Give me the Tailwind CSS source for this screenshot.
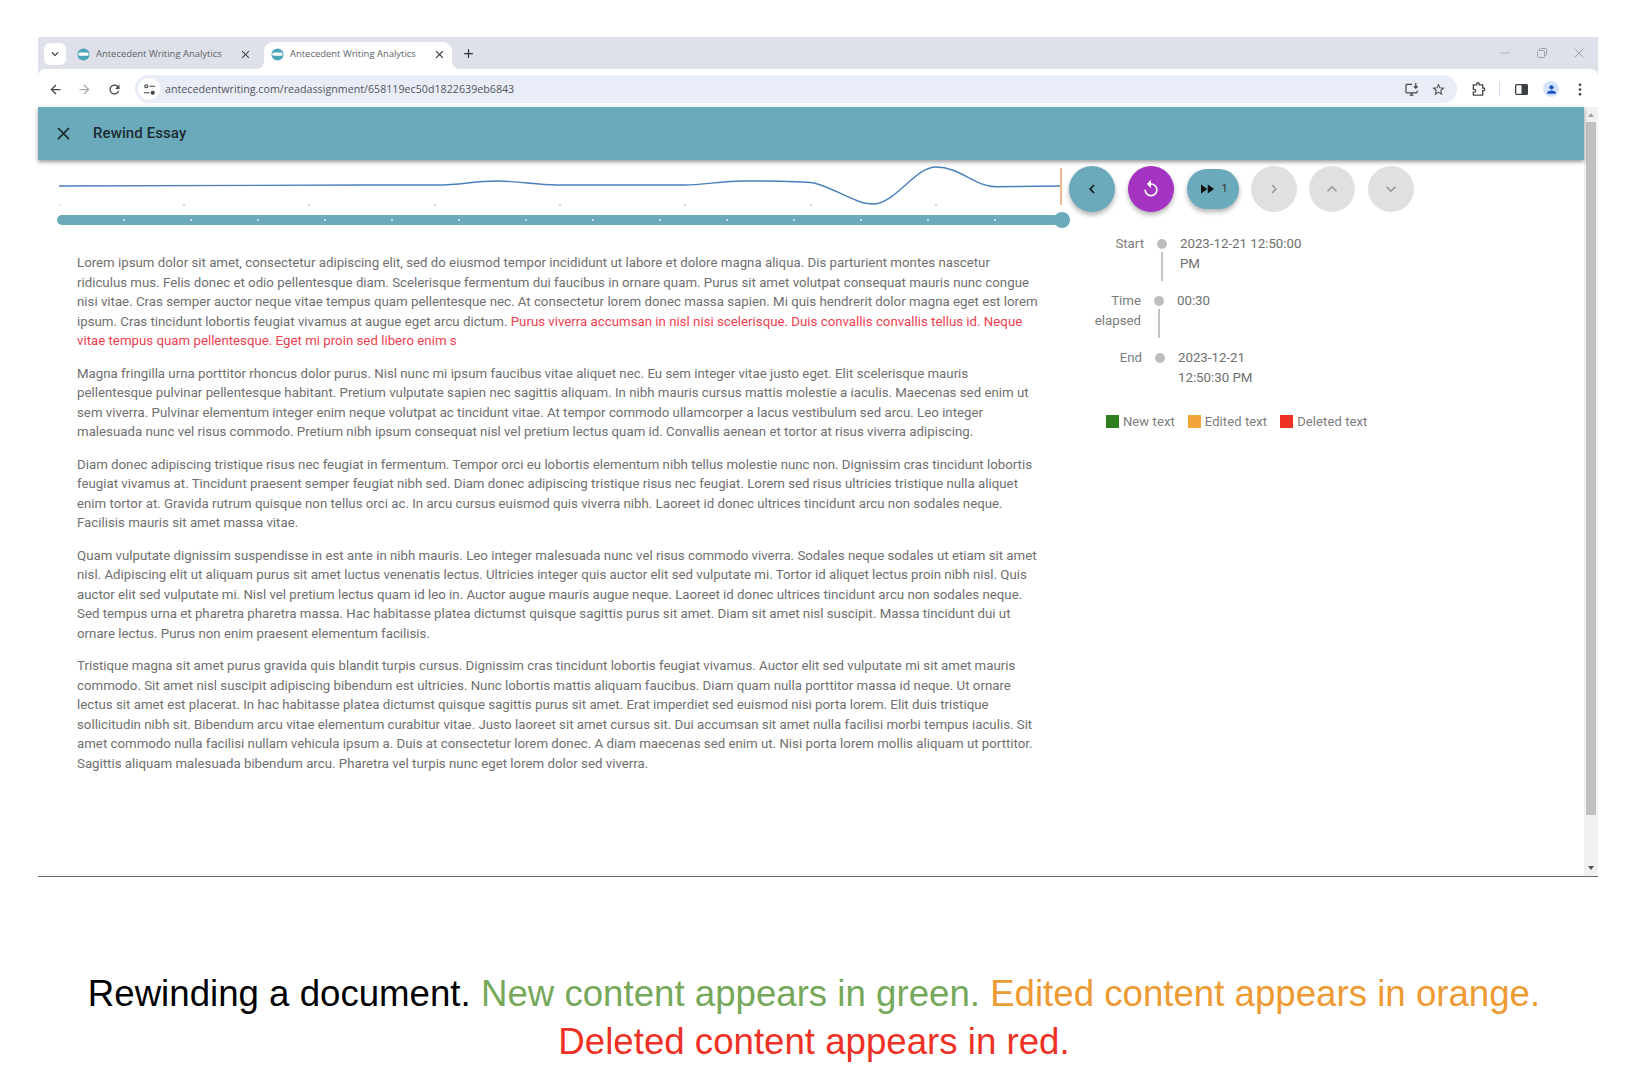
<!DOCTYPE html>
<html>
<head>
<meta charset="utf-8">
<script src="https://cdn.jsdelivr.net/npm/@tailwindcss/browser@4"></script>
</head>
<body class="bg-white">
<div class="w-[1639px] h-[1090px] overflow-hidden pt-[37px] font-['Roboto',sans-serif]">
  <div class="ml-[38px] w-[1560px] h-[840px] border-b border-[#666c6e] flex flex-col bg-[#dee1e9]">
    <!-- tab strip -->
    <div class="h-[32px] bg-[#dee1e9] flex items-end relative shrink-0">
      <div class="absolute left-[6px] top-[6px] w-[22px] h-[22px] rounded-[6px] bg-white flex items-center justify-center">
        <svg class="w-[14px] h-[14px] text-[#333]" viewBox="0 0 24 24" fill="currentColor"><path d="M16.59 8.59 12 13.17 7.41 8.59 6 10l6 6 6-6z"/></svg>
      </div>
      <div class="ml-[34px] w-[192px] h-[26px] flex items-center pl-[5px] pb-[4px] shrink-0">
        <svg class="w-[13px] h-[13px] shrink-0" viewBox="0 0 14 14"><circle cx="7" cy="7" r="6.5" fill="#4da4bb"/><rect x="1.5" y="4.8" width="11" height="3.6" rx="1.8" fill="#fff"/></svg>
        <span class="ml-[6px] text-[9.45px] text-[#5f6368] font-['Open_Sans',sans-serif] whitespace-nowrap w-[126px]">Antecedent Writing Analytics</span>
        <svg class="ml-[17px] w-[13px] h-[13px] text-[#444]" viewBox="0 0 24 24" fill="currentColor"><path d="M19 6.41 17.59 5 12 10.59 6.41 5 5 6.41 10.59 12 5 17.59 6.41 19 12 13.41 17.59 19 19 17.59 13.41 12z"/></svg>
      </div>
      <div class="w-[188px] h-[27px] bg-white rounded-t-[9px] flex items-center pl-[7px] pb-[3px] shrink-0 relative">
        <i class="absolute left-[-8px] bottom-0 w-[8px] h-[8px] bg-[radial-gradient(circle_at_0_0,#dee1e9_8px,#fff_8px)]"></i>
        <i class="absolute right-[-8px] bottom-0 w-[8px] h-[8px] bg-[radial-gradient(circle_at_100%_0,#dee1e9_8px,#fff_8px)]"></i>
        <svg class="w-[13px] h-[13px] shrink-0" viewBox="0 0 14 14"><circle cx="7" cy="7" r="6.5" fill="#4da4bb"/><rect x="1.5" y="4.8" width="11" height="3.6" rx="1.8" fill="#fff"/></svg>
        <span class="ml-[6px] text-[9.45px] text-[#5f6368] font-['Open_Sans',sans-serif] whitespace-nowrap w-[126px]">Antecedent Writing Analytics</span>
        <svg class="ml-[17px] w-[13px] h-[13px] text-[#333]" viewBox="0 0 24 24" fill="currentColor"><path d="M19 6.41 17.59 5 12 10.59 6.41 5 5 6.41 10.59 12 5 17.59 6.41 19 12 13.41 17.59 19 19 17.59 13.41 12z"/></svg>
      </div>
      <svg class="ml-[9px] mb-[8px] w-[15px] h-[15px] text-[#333]" viewBox="0 0 24 24" fill="currentColor"><path d="M19 13h-6v6h-2v-6H5v-2h6V5h2v6h6v2z"/></svg>
      <div class="ml-auto flex items-center h-full pr-[14px] gap-[27px] self-center">
        <svg class="w-[10px] h-[10px] text-[#b4b7bd]" viewBox="0 0 10 10"><rect y="4.5" width="10" height="1" fill="currentColor"/></svg>
        <svg class="w-[10px] h-[10px] text-[#a0a3a8]" viewBox="0 0 10 10" fill="none" stroke="currentColor"><rect x=".5" y="2.5" width="7" height="7" rx="1"/><path d="M2.5 2.5V1.5a1 1 0 0 1 1-1h5a1 1 0 0 1 1 1v5a1 1 0 0 1-1 1h-1"/></svg>
        <svg class="w-[10px] h-[10px] text-[#a0a3a8]" viewBox="0 0 10 10" stroke="currentColor"><path d="M.5.5l9 9M9.5.5l-9 9"/></svg>
      </div>
    </div>
    <!-- toolbar -->
    <div class="h-[38px] bg-white rounded-t-[7px] flex items-center shrink-0 text-[#45474a] pt-[2px]">
      <svg class="ml-[10px] w-[15px] h-[15px]" viewBox="0 0 24 24" fill="currentColor"><path d="M20 11H7.83l5.59-5.59L12 4l-8 8 8 8 1.41-1.41L7.83 13H20v-2z"/></svg>
      <svg class="ml-[14px] w-[15px] h-[15px] text-[#a8aaad]" viewBox="0 0 24 24" fill="currentColor"><path d="M4 11h12.17l-5.59-5.59L12 4l8 8-8 8-1.41-1.41L16.17 13H4v-2z"/></svg>
      <svg class="ml-[15px] w-[15px] h-[15px]" viewBox="0 0 24 24" fill="currentColor"><path d="M17.65 6.35C16.2 4.9 14.21 4 12 4c-4.42 0-7.99 3.58-7.99 8s3.57 8 7.99 8c3.73 0 6.84-2.55 7.73-6h-2.08c-.82 2.33-3.04 4-5.65 4-3.31 0-6-2.69-6-6s2.69-6 6-6c1.66 0 3.14.69 4.22 1.78L13 11h7V4l-2.35 2.35z"/></svg>
      <div class="ml-[13px] w-[1322px] h-[28px] bg-[#e9edf8] rounded-full flex items-center pl-[3px] relative shrink-0">
        <div class="w-[22px] h-[22px] rounded-full bg-white flex items-center justify-center">
          <svg class="w-[13px] h-[13px]" viewBox="0 0 14 14" fill="none" stroke="#444" stroke-width="1.3"><circle cx="3.5" cy="3.5" r="1.6"/><path d="M7 3.5h6M1 10.5h6"/><circle cx="10.5" cy="10.5" r="1.6" fill="#444"/></svg>
        </div>
        <span class="ml-[5px] text-[10.7px] text-[#53565a] font-['Open_Sans',sans-serif] whitespace-nowrap">antecedentwriting.com/readassignment/658119ec50d1822639eb6843</span>
        <div class="ml-auto flex items-center gap-[11px] pr-[11px]">
          <svg class="w-[15px] h-[15px]" viewBox="0 0 16 16" fill="none" stroke="#45474a" stroke-width="1.3"><path d="M7.5 2.5H2a1 1 0 0 0-1 1v7a1 1 0 0 0 1 1h10a1 1 0 0 0 1-1V9M5 14h4M7 12v2M11.5 1v5M9.5 4.5l2 2 2-2"/></svg>
          <svg class="w-[15px] h-[15px]" viewBox="0 0 24 24" fill="#45474a"><path d="M22 9.24l-7.19-.62L12 2 9.19 8.63 2 9.24l5.46 4.73L5.82 21 12 17.27 18.18 21l-1.63-7.03L22 9.24zM12 15.4l-3.76 2.27 1-4.28-3.32-2.88 4.38-.38L12 6.1l1.71 4.04 4.38.38-3.32 2.88 1 4.28L12 15.4z"/></svg>
        </div>
      </div>
      <svg class="ml-[14px] w-[15px] h-[15px]" viewBox="0 0 16 16" fill="none" stroke="#45474a" stroke-width="1.4"><path d="M6 3V2.2a1.4 1.4 0 0 1 2.8 0V3h3.7v3.4h.8a1.4 1.4 0 0 1 0 2.8h-.8V14H2.5v-3.2h1a1.5 1.5 0 0 0 0-3h-1V3z"/></svg>
      <div class="ml-[13px] w-[1px] h-[14px] bg-[#d5dcf0]"></div>
      <svg class="ml-[15px] w-[13px] h-[13px]" viewBox="0 0 14 14"><rect x=".7" y="1.7" width="12.6" height="10.6" rx="1" fill="none" stroke="#3c3f43" stroke-width="1.4"/><rect x="7" y="2" width="6" height="10" fill="#3c3f43"/></svg>
      <div class="ml-[15px] w-[16px] h-[16px] rounded-full bg-[#d3e3fd] flex items-center justify-center">
        <svg class="w-[13px] h-[13px]" viewBox="0 0 24 24" fill="#1a4fc4"><path d="M12 12c2.21 0 4-1.79 4-4s-1.79-4-4-4-4 1.79-4 4 1.79 4 4 4zm0 2c-2.67 0-8 1.34-8 4v2h16v-2c0-2.66-5.33-4-8-4z"/></svg>
      </div>
      <svg class="ml-[19px] w-[4px] h-[13px]" viewBox="0 0 4 13" fill="#3c3f43"><circle cx="2" cy="1.8" r="1.3"/><circle cx="2" cy="6.5" r="1.3"/><circle cx="2" cy="11.2" r="1.3"/></svg>
    </div>
    <!-- page -->
    <div class="flex-1 flex min-h-0 bg-white">
      <div class="flex-1 min-w-0 flex flex-col">
        <div class="h-[53px] bg-[#6aaabb] shadow-[0_2px_4px_rgba(0,0,0,0.4)] flex items-center shrink-0 relative">
          <svg class="ml-[15px] w-[21px] h-[21px] text-[#1c2b30]" viewBox="0 0 24 24" fill="currentColor"><path d="M19 6.41 17.59 5 12 10.59 6.41 5 5 6.41 10.59 12 5 17.59 6.41 19 12 13.41 17.59 19 19 17.59 13.41 12z"/></svg>
          <span class="ml-[19px] text-[15px] font-medium text-[#1c2b30] tracking-[0.1px]">Rewind Essay</span>
        </div>
        <div class="flex flex-1">
          <!-- left -->
          <div class="w-[1031px] shrink-0 pl-[20px]">
            <svg class="block ml-px w-[1004px] h-[50px]" viewBox="59 160 1004 50" fill="none">
              <path d="M59 186 C150 185.5 300 185 437 185 C460 185 475 181 497 181 C520 181 535 185 557 185 L684 185 C705 185 720 181 745 181 C775 181 800 181 814 183 C835 188 855 204 873 204 C895 204 915 167 936 167 C960 167 975 186.7 996 186.7 L1060 186" stroke="#4a80bb" stroke-width="1.4"/>
              <path d="M1061 168V205" stroke="#f09a5a" stroke-width="1.4"/>
              <g fill="#aaa"><circle cx="59" cy="205" r=".8"/><circle cx="184" cy="205" r=".8"/><circle cx="309" cy="205" r=".8"/><circle cx="435" cy="205" r=".8"/><circle cx="560" cy="205" r=".8"/><circle cx="685" cy="205" r=".8"/><circle cx="811" cy="205" r=".8"/><circle cx="936" cy="205" r=".8"/></g>
            </svg>
            <div class="relative mt-[5px] -ml-px w-[1010px] h-[10px] rounded-full bg-[#6aaabb] flex items-center pl-[66px] gap-[65px]">
              <i class="w-[2px] h-[2px] rounded-full bg-white/80"></i><i class="w-[2px] h-[2px] rounded-full bg-white/80"></i><i class="w-[2px] h-[2px] rounded-full bg-white/80"></i><i class="w-[2px] h-[2px] rounded-full bg-white/80"></i><i class="w-[2px] h-[2px] rounded-full bg-white/80"></i><i class="w-[2px] h-[2px] rounded-full bg-white/80"></i><i class="w-[2px] h-[2px] rounded-full bg-white/80"></i><i class="w-[2px] h-[2px] rounded-full bg-white/80"></i><i class="w-[2px] h-[2px] rounded-full bg-white/80"></i><i class="w-[2px] h-[2px] rounded-full bg-white/80"></i><i class="w-[2px] h-[2px] rounded-full bg-white/80"></i><i class="w-[2px] h-[2px] rounded-full bg-white/80"></i><i class="w-[2px] h-[2px] rounded-full bg-white/80"></i><i class="w-[2px] h-[2px] rounded-full bg-white/80"></i>
              <div class="absolute right-[-3px] top-[-3px] w-[16px] h-[16px] rounded-full bg-[#6aaabb]"></div>
            </div>
            <div class="mt-[28px] pl-[19px] text-[13.27px] leading-[19.5px] text-[#6f6f6f] whitespace-nowrap flex flex-col gap-[13px]">
              <p>Lorem ipsum dolor sit amet, consectetur adipiscing elit, sed do eiusmod tempor incididunt ut labore et dolore magna aliqua. Dis parturient montes nascetur<br>ridiculus mus. Felis donec et odio pellentesque diam. Scelerisque fermentum dui faucibus in ornare quam. Purus sit amet volutpat consequat mauris nunc congue<br>nisi vitae. Cras semper auctor neque vitae tempus quam pellentesque nec. At consectetur lorem donec massa sapien. Mi quis hendrerit dolor magna eget est lorem<br>ipsum. Cras tincidunt lobortis feugiat vivamus at augue eget arcu dictum. <span class="text-[#f04050]">Purus viverra accumsan in nisl nisi scelerisque. Duis convallis convallis tellus id. Neque<br>vitae tempus quam pellentesque. Eget mi proin sed libero enim s</span></p>
              <p>Magna fringilla urna porttitor rhoncus dolor purus. Nisl nunc mi ipsum faucibus vitae aliquet nec. Eu sem integer vitae justo eget. Elit scelerisque mauris<br>pellentesque pulvinar pellentesque habitant. Pretium vulputate sapien nec sagittis aliquam. In nibh mauris cursus mattis molestie a iaculis. Maecenas sed enim ut<br>sem viverra. Pulvinar elementum integer enim neque volutpat ac tincidunt vitae. At tempor commodo ullamcorper a lacus vestibulum sed arcu. Leo integer<br>malesuada nunc vel risus commodo. Pretium nibh ipsum consequat nisl vel pretium lectus quam id. Convallis aenean et tortor at risus viverra adipiscing.</p>
              <p>Diam donec adipiscing tristique risus nec feugiat in fermentum. Tempor orci eu lobortis elementum nibh tellus molestie nunc non. Dignissim cras tincidunt lobortis<br>feugiat vivamus at. Tincidunt praesent semper feugiat nibh sed. Diam donec adipiscing tristique risus nec feugiat. Lorem sed risus ultricies tristique nulla aliquet<br>enim tortor at. Gravida rutrum quisque non tellus orci ac. In arcu cursus euismod quis viverra nibh. Laoreet id donec ultrices tincidunt arcu non sodales neque.<br>Facilisis mauris sit amet massa vitae.</p>
              <p>Quam vulputate dignissim suspendisse in est ante in nibh mauris. Leo integer malesuada nunc vel risus commodo viverra. Sodales neque sodales ut etiam sit amet<br>nisl. Adipiscing elit ut aliquam purus sit amet luctus venenatis lectus. Ultricies integer quis auctor elit sed vulputate mi. Tortor id aliquet lectus proin nibh nisl. Quis<br>auctor elit sed vulputate mi. Nisl vel pretium lectus quam id leo in. Auctor augue mauris augue neque. Laoreet id donec ultrices tincidunt arcu non sodales neque.<br>Sed tempus urna et pharetra pharetra massa. Hac habitasse platea dictumst quisque sagittis purus sit amet. Diam sit amet nisl suscipit. Massa tincidunt dui ut<br>ornare lectus. Purus non enim praesent elementum facilisis.</p>
              <p>Tristique magna sit amet purus gravida quis blandit turpis cursus. Dignissim cras tincidunt lobortis feugiat vivamus. Auctor elit sed vulputate mi sit amet mauris<br>commodo. Sit amet nisl suscipit adipiscing bibendum est ultricies. Nunc lobortis mattis aliquam faucibus. Diam quam nulla porttitor massa id neque. Ut ornare<br>lectus sit amet est placerat. In hac habitasse platea dictumst quisque sagittis purus sit amet. Erat imperdiet sed euismod nisi porta lorem. Elit duis tristique<br>sollicitudin nibh sit. Bibendum arcu vitae elementum curabitur vitae. Justo laoreet sit amet cursus sit. Dui accumsan sit amet nulla facilisi morbi tempus iaculis. Sit<br>amet commodo nulla facilisi nullam vehicula ipsum a. Duis at consectetur lorem donec. A diam maecenas sed enim ut. Nisi porta lorem mollis aliquam ut porttitor.<br>Sagittis aliquam malesuada bibendum arcu. Pharetra vel turpis nunc eget lorem dolor sed viverra.</p>
            </div>
          </div>
          <!-- right -->
          <div class="flex-1 min-w-0">
            <div class="flex items-center mt-[6px] ml-[0px]">
              <button class="w-[46px] h-[46px] rounded-full bg-[#6aaabb] shadow-[0_3px_5px_rgba(0,0,0,0.3)] flex items-center justify-center text-[#111]"><svg class="w-[18px] h-[18px]" viewBox="0 0 24 24" fill="currentColor"><path d="M15.41 7.41 14 6l-6 6 6 6 1.41-1.41L10.83 12z"/></svg></button>
              <button class="ml-[13px] w-[46px] h-[46px] rounded-full bg-[#a333c0] shadow-[0_3px_5px_rgba(0,0,0,0.3)] flex items-center justify-center text-white"><svg class="w-[20px] h-[20px]" viewBox="0 0 24 24" fill="currentColor"><path d="M12 5V1L7 6l5 5V7c3.31 0 6 2.69 6 6s-2.69 6-6 6-6-2.69-6-6H4c0 4.42 3.58 8 8 8s8-3.58 8-8-3.58-8-8-8z"/></svg></button>
              <button class="ml-[13px] w-[52px] h-[40px] rounded-full bg-[#6aaabb] shadow-[0_3px_5px_rgba(0,0,0,0.3)] flex items-center justify-center gap-[5px] text-[#111]"><svg class="w-[18px] h-[18px]" viewBox="0 0 24 24" fill="currentColor"><path d="M4 18l8.5-6L4 6v12zm9-12v12l8.5-6L13 6z"/></svg><span class="text-[11px] text-[#333]">1</span></button>
              <button class="ml-[12px] w-[46px] h-[46px] rounded-full bg-[#e0e0e0] flex items-center justify-center text-[#9a9a9a]"><svg class="w-[18px] h-[18px]" viewBox="0 0 24 24" fill="currentColor"><path d="M8.59 16.59 10 18l6-6-6-6-1.41 1.41L13.17 12z"/></svg></button>
              <button class="ml-[12px] w-[46px] h-[46px] rounded-full bg-[#e0e0e0] flex items-center justify-center text-[#9a9a9a]"><svg class="w-[20px] h-[20px]" viewBox="0 0 24 24" fill="currentColor"><path d="M12 8l-6 6 1.41 1.41L12 10.83l4.59 4.58L18 14z"/></svg></button>
              <button class="ml-[13px] w-[46px] h-[46px] rounded-full bg-[#e0e0e0] flex items-center justify-center text-[#9a9a9a]"><svg class="w-[20px] h-[20px]" viewBox="0 0 24 24" fill="currentColor"><path d="M16.59 8.59 12 13.17 7.41 8.59 6 10l6 6 6-6z"/></svg></button>
            </div>
            <div class="mt-[22px] text-[13.27px] leading-[19.5px] text-[#6f6f6f]">
              <div class="flex h-[57px]">
                <div class="w-[75px] text-right text-[#7c7c7c]">Start</div>
                <div class="w-[36px] flex flex-col items-center">
                  <i class="mt-[5px] w-[10px] h-[10px] rounded-full bg-[#bdbdbd]"></i>
                  <i class="mt-[3px] w-[2px] h-[29px] bg-[#c4c4c4]"></i>
                </div>
                <div class="whitespace-nowrap">2023-12-21 12:50:00<br>PM</div>
              </div>
              <div class="flex h-[57px]">
                <div class="w-[72px] text-right text-[#7c7c7c]">Time<br>elapsed</div>
                <div class="w-[36px] flex flex-col items-center">
                  <i class="mt-[5px] w-[10px] h-[10px] rounded-full bg-[#bdbdbd]"></i>
                  <i class="mt-[3px] w-[2px] h-[29px] bg-[#c4c4c4]"></i>
                </div>
                <div>00:30</div>
              </div>
              <div class="flex h-[57px]">
                <div class="w-[73px] text-right text-[#7c7c7c]">End</div>
                <div class="w-[36px] flex flex-col items-center">
                  <i class="mt-[5px] w-[10px] h-[10px] rounded-full bg-[#bdbdbd]"></i>
                </div>
                <div class="whitespace-nowrap">2023-12-21<br>12:50:30 PM</div>
              </div>
            </div>
            <div class="mt-[7px] ml-[37px] flex items-center text-[13px] leading-[19.5px] text-[#7c7c7c] tracking-[0.1px]">
              <i class="w-[13px] h-[13px] bg-[#2e7d1e]"></i><span class="ml-[4px]">New text</span>
              <i class="ml-[13px] w-[13px] h-[13px] bg-[#f2a63a]"></i><span class="ml-[4px]">Edited text</span>
              <i class="ml-[13px] w-[13px] h-[13px] bg-[#ee3124]"></i><span class="ml-[4px]">Deleted text</span>
            </div>
          </div>
        </div>
      </div>
      <!-- scrollbar -->
      <div class="w-[14px] shrink-0 bg-[#f1f1f1] flex flex-col items-center">
        <div class="h-[15px] flex items-center justify-center"><i class="w-0 h-0 border-x-[3.5px] border-x-transparent border-b-[4px] border-b-[#a3a3a3]"></i></div>
        <div class="w-[10px] h-[693px] bg-[#c1c1c1]"></div>
        <div class="mt-auto h-[16px] flex items-center justify-center"><i class="w-0 h-0 border-x-[3.5px] border-x-transparent border-t-[4px] border-t-[#505050]"></i></div>
      </div>
    </div>
  </div>
  <div class="mt-[93px] w-[1628px] text-center text-[36.65px] leading-[48px] font-['Liberation_Sans',sans-serif] text-black">
    Rewinding a document. <span class="text-[#76a85a]">New content appears in green.</span> <span class="text-[#ee9a33]">Edited content appears in orange.</span><br><span class="text-[#ee3124]">Deleted content appears in red.</span>
  </div>
</div>
</body>
</html>
